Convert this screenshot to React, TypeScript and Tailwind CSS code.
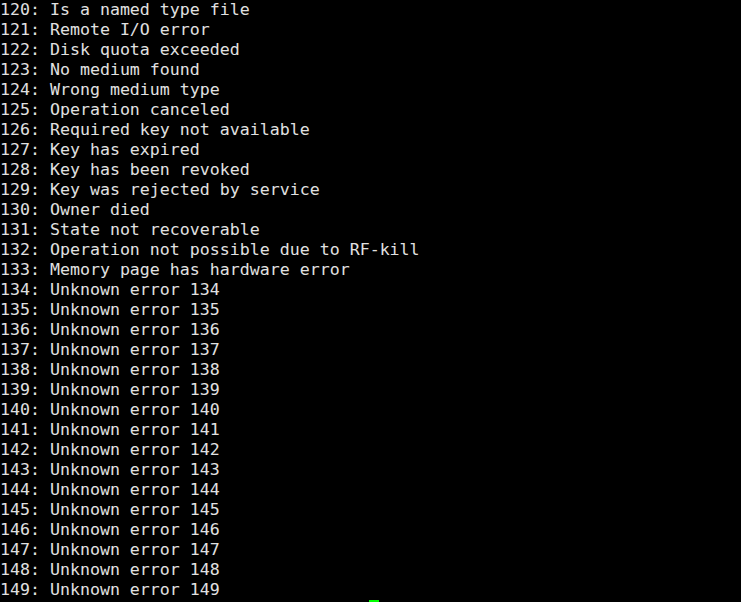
const named: [number, string][] = [
  [120, "Is a named type file"],
  [121, "Remote I/O error"],
  [122, "Disk quota exceeded"],
  [123, "No medium found"],
  [124, "Wrong medium type"],
  [125, "Operation canceled"],
  [126, "Required key not available"],
  [127, "Key has expired"],
  [128, "Key has been revoked"],
  [129, "Key was rejected by service"],
  [130, "Owner died"],
  [131, "State not recoverable"],
  [132, "Operation not possible due to RF-kill"],
  [133, "Memory page has hardware error"],
];

const lines: string[] = [
  ...named.map(([n, t]) => `${n}: ${t}`),
  ...Array.from({ length: 16 }, (_, i) => `${134 + i}: Unknown error ${134 + i}`),
];

export default function App() {
  return (
    <div className="w-[741px] h-[602px] bg-black overflow-hidden text-[#e0e0e0] font-['DejaVu_Sans_Mono',monospace] text-[16.6px] leading-[20px] whitespace-pre">
      {lines.map((l) => (
        <div key={l}>{l}</div>
      ))}
      <div className="h-[20px] pl-[369px]">
        <div className="w-[10px] h-[20px] bg-[#00ff00]" />
      </div>
    </div>
  );
}
